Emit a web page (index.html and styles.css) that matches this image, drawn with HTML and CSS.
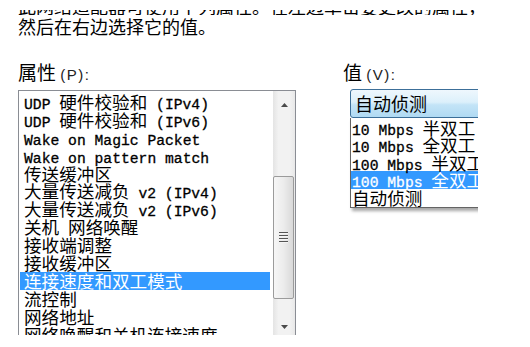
FILE: index.html
```html
<!DOCTYPE html>
<html lang="zh-CN">
<head>
<meta charset="utf-8">
<title>属性</title>
<link rel="stylesheet" href="styles.css">
</head>
<body>
<div class="page">
  <div class="intro">
    <div class="clip"><p class="line">此网络适配器可使用下列属性。在左边单击要更改的属性，</p></div>
    <p class="line second">然后在右边选择它的值。</p>
  </div>
  <div class="fields">
    <div class="col-left">
      <div class="label">属性 <span class="key">(P):</span></div>
      <div class="listbox">
        <div class="items">
          <div class="row"><span class="en">UDP </span>硬件校验和<span class="en"> (IPv4)</span></div>
          <div class="row"><span class="en">UDP </span>硬件校验和<span class="en"> (IPv6)</span></div>
          <div class="row"><span class="en">Wake on Magic Packet</span></div>
          <div class="row"><span class="en">Wake on pattern match</span></div>
          <div class="row">传送缓冲区</div>
          <div class="row">大量传送减负<span class="en"> v2 (IPv4)</span></div>
          <div class="row">大量传送减负<span class="en"> v2 (IPv6)</span></div>
          <div class="row">关机<span class="en"> </span>网络唤醒</div>
          <div class="row">接收端调整</div>
          <div class="row">接收缓冲区</div>
          <div class="row sel">连接速度和双工模式</div>
          <div class="row">流控制</div>
          <div class="row">网络地址</div>
          <div class="row">网络唤醒和关机连接速度</div>
        </div>
        <div class="scrollbar">
          <div class="sb-btn"><svg width="7" height="4" viewBox="0 0 7 4"><polygon points="0,4 3.5,0 7,4" fill="#4a4a4a"/></svg></div>
          <div class="sb-track">
            <div class="thumb"><div class="grip"></div></div>
          </div>
          <div class="sb-btn"><svg width="7" height="4" viewBox="0 0 7 4"><polygon points="0,0 7,0 3.5,4" fill="#4a4a4a"/></svg></div>
        </div>
      </div>
    </div>
    <div class="col-right">
      <div class="label">值 <span class="key">(V):</span></div>
      <div class="combo">自动侦测</div>
      <div class="dropdown">
        <div class="opt"><span class="en">10 Mbps </span>半双工</div>
        <div class="opt"><span class="en">10 Mbps </span>全双工</div>
        <div class="opt"><span class="en">100 Mbps </span>半双工</div>
        <div class="opt sel"><span class="en">100 Mbps </span>全双工</div>
        <div class="opt">自动侦测</div>
      </div>
    </div>
  </div>
</div>
</body>
</html>
```
FILE: styles.css
```css
* { box-sizing: border-box; }
html, body { margin: 0; padding: 0; background: #fff; }
body {
  font-family: "Noto Sans CJK SC", sans-serif;
  color: #000;
  width: 530px;
  height: 347px;
  overflow: hidden;
}
.page { padding: 10px 0 0 18px; }

.line {
  margin: 0;
  font-size: 18px;
  line-height: 20px;
  height: 20px;
  white-space: nowrap;
}
.clip { height: 5px; overflow: hidden; }
.clip .line { margin-top: -14px; }
.line.second { margin-top: 1px; }

.fields {
  display: flex;
  gap: 47px;
  margin-top: 26px;
}
.label {
  font-size: 19px;
  line-height: 20px;
  height: 20px;
  white-space: nowrap;
}
.key {
  font-family: "Liberation Sans", sans-serif;
  font-size: 15px;
  line-height: 15px;
  letter-spacing: 1.5px;
  color: #222;
}

.col-left { width: 278px; flex: none; }
.col-left .label { margin-bottom: 8px; }

.listbox {
  display: flex;
  height: 245px;
  overflow: hidden;
  border: 1px solid #8a8d94;
  border-bottom: none;
  background: #fff;
}
.items {
  flex: 1;
  padding: 2px 3px 0 1px;
}
.row, .opt {
  height: 17.9px;
  line-height: 17.9px;
  font-size: 17.6px;
  padding-left: 4px;
  white-space: nowrap;
}
.en {
  font-family: "Liberation Mono", monospace;
  font-size: 14.7px;
  white-space: pre;
  -webkit-text-stroke: 0.3px currentColor;
}
.sel { background: #3399ff; color: #fff; }

.scrollbar {
  width: 22px;
  flex: none;
  height: 250px;
  display: flex;
  flex-direction: column;
  background: linear-gradient(to right, #e4e4e4, #f2f2f2 25%, #f2f2f2 75%, #e8e8e8);
}
.sb-btn {
  height: 28px;
  flex: none;
  display: flex;
  align-items: center;
  justify-content: center;
}
.sb-btn svg { display: block; }
.sb-track { flex: 1; padding-top: 57px; }
.thumb {
  height: 123px;
  margin: 0 1px 0 0;
  border: 1px solid #9b9b9b;
  border-radius: 2px;
  background: linear-gradient(to right, #f6f6f6, #ececec 50%, #d9d9d9);
  display: flex;
  align-items: center;
  justify-content: center;
}
.grip {
  width: 9px;
  height: 11px;
  background: repeating-linear-gradient(to bottom, #555 0 1px, #f4f4f4 1px 2px, transparent 2px 3px);
}

.col-right {
  width: 135px;
  flex: none;
  overflow: hidden;
  height: 230px;
}
.col-right .label { margin-bottom: 7px; }
.combo {
  margin-left: 7px;
  width: 170px;
  height: 29px;
  border: 1px solid #3c6f99;
  border-radius: 3px;
  background: linear-gradient(to bottom, #eef7fd, #dcf0fb 45%, #c3e4f7 55%, #b0daf3);
  font-size: 18px;
  line-height: 26px;
  padding-left: 4px;
  white-space: nowrap;
}
.dropdown {
  margin-left: 7px;
  width: 170px;
  border: 1px solid #646464;
  border-top: none;
  background: #fff;
  padding: 1px 0 1px 0;
  box-shadow: 2px 3px 3px rgba(0, 0, 0, 0.35);
}
.opt {
  height: 17.4px;
  line-height: 17.4px;
  padding-left: 1px;
}
```
